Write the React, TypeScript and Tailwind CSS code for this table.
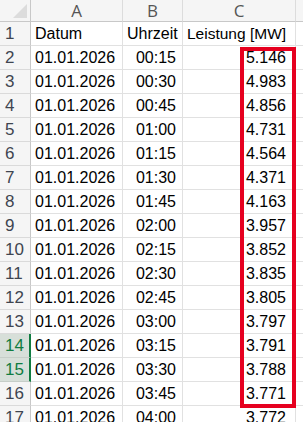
import React from 'react';

const rows = [
  ['00:15', '5.146'],
  ['00:30', '4.983'],
  ['00:45', '4.856'],
  ['01:00', '4.731'],
  ['01:15', '4.564'],
  ['01:30', '4.371'],
  ['01:45', '4.163'],
  ['02:00', '3.957'],
  ['02:15', '3.852'],
  ['02:30', '3.835'],
  ['02:45', '3.805'],
  ['03:00', '3.797'],
  ['03:15', '3.791'],
  ['03:30', '3.788'],
  ['03:45', '3.771'],
  ['04:00', '3.772'],
];

const cell = 'h-[24px] border-r border-b border-[#e1e1e1] flex items-center overflow-hidden whitespace-nowrap';

function RowHead({ n }: { n: number }) {
  const sel = n === 14 || n === 15;
  return (
    <div
      className={
        'h-[24px] border-b flex items-center pl-[5px] text-[17px] ' +
        (sel
          ? 'bg-[#d7dfd9] text-[#107c41] border-[#c6cec8] border-r-2 border-r-[#107c41]'
          : 'bg-[#f5f5f5] text-[#3f4550] border-[#dadada] border-r border-r-[#c8c8c8]')
      }
    >
      {n}
    </div>
  );
}

export default function App() {
  return (
    <div className="relative w-[303px] h-[422px] overflow-hidden bg-white font-['Liberation_Sans',Arial,sans-serif] text-[16px] text-black">
      <div className="grid grid-cols-[31px_92px_60px_113px_40px]">
        {/* column headers */}
        <div className="h-[22px] bg-[#f5f5f5] border-r border-b border-[#c8c8c8] relative">
          <div className="absolute right-[3px] bottom-[3px] w-0 h-0 border-l-[14px] border-l-transparent border-b-[14px] border-b-[#dcdcdc]" />
        </div>
        {['A', 'B', 'C', ''].map((h, i) => (
          <div
            key={i}
            className="h-[22px] bg-[#f5f5f5] border-r border-b border-r-[#dcdcdc] border-b-[#c8c8c8] flex items-center justify-center text-[17px] text-[#555] font-['Open_Sans',sans-serif]"
          >
            {h}
          </div>
        ))}

        {/* header row */}
        <RowHead n={1} />
        <div className={cell + ' pl-[4px]'}>Datum</div>
        <div className={cell + ' pl-[4px]'}>Uhrzeit</div>
        <div className={cell + ' pl-[4px] text-[15.5px]'}>Leistung [MW]</div>
        <div className={cell} />

        {rows.map(([t, v], i) => (
          <React.Fragment key={i}>
            <RowHead n={i + 2} />
            <div className={cell + ' pl-[4px]'}>01.01.2026</div>
            <div className={cell + ' justify-end pr-[6px]'}>{t}</div>
            <div className={cell + ' justify-end pr-[9px]'}>{v}</div>
            <div className={cell} />
          </React.Fragment>
        ))}
      </div>

      {/* selection highlight */}
      <div className="absolute left-[240px] top-[47px] w-[56px] h-[361px] border-4 border-[#e6001f] pointer-events-none" />
    </div>
  );
}
